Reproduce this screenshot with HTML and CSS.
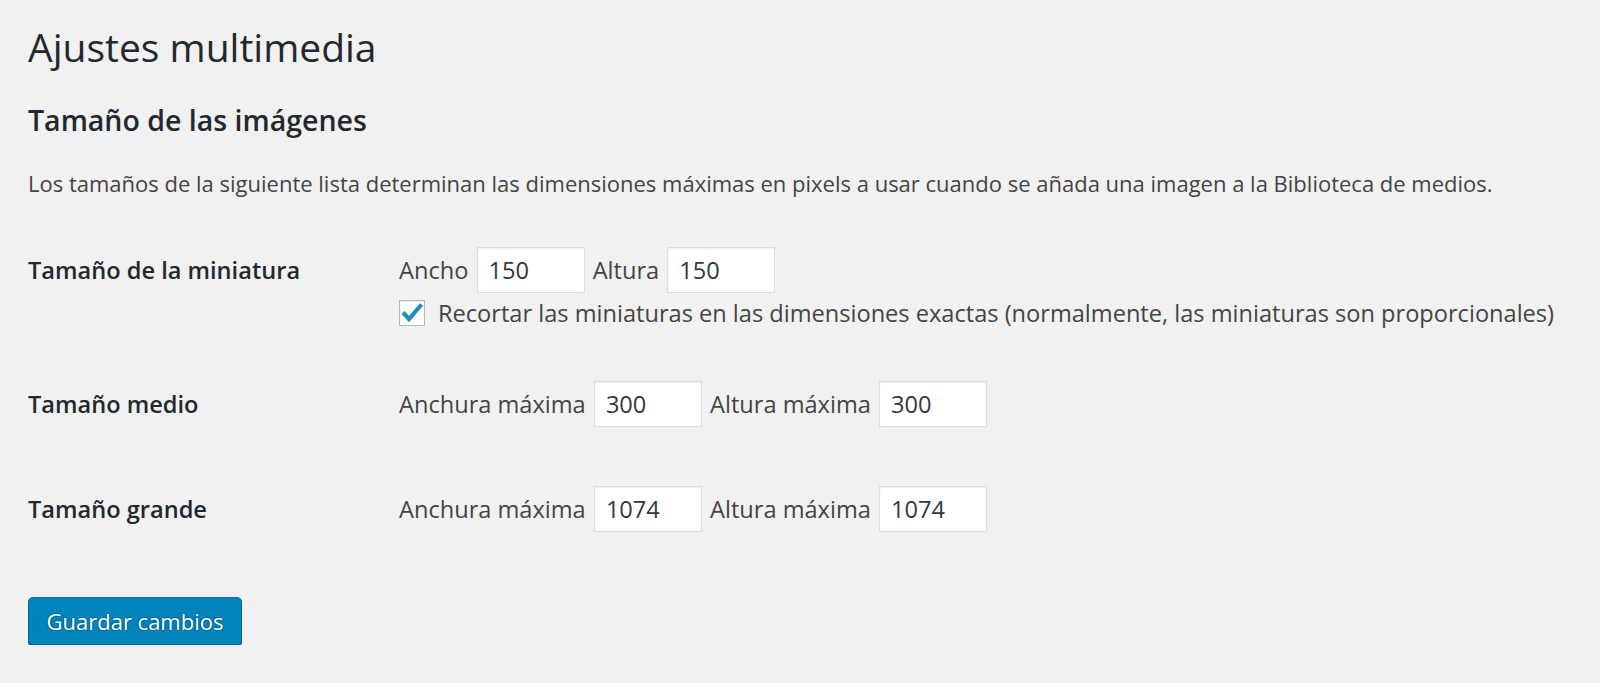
FILE: index.html
```html
<!DOCTYPE html>
<html lang="es">
<head>
<meta charset="utf-8">
<title>Ajustes multimedia</title>
<link rel="stylesheet" href="styles.css">
</head>
<body>
<div class="wrap">
  <h1 class="page-title">Ajustes multimedia</h1>
  <h2 class="section-title">Tamaño de las imágenes</h2>
  <p class="intro">Los tamaños de la siguiente lista determinan las dimensiones máximas en pixels a usar cuando se añada una imagen a la Biblioteca de medios.</p>

  <div class="form-table">
    <div class="row row-thumb">
      <div class="row-label">Tamaño de la miniatura</div>
      <div class="row-field">
        <div class="field-line">
          <label class="field-label" for="tw">Ancho</label> <input class="num" id="tw" type="text" value="150"> <label class="field-label" for="th">Altura</label> <input class="num" id="th" type="text" value="150">
        </div>
        <label class="check-line">
          <span class="checkbox"><svg viewBox="0 0 26 26" width="26" height="26"><path d="M4 12.5 L10 19 L22.5 4.5" fill="none" stroke="#1e8cbe" stroke-width="4.2"/></svg></span>
          <span class="check-text">Recortar las miniaturas en las dimensiones exactas (normalmente, las miniaturas son proporcionales)</span>
        </label>
      </div>
    </div>

    <div class="row row-medium">
      <div class="row-label">Tamaño medio</div>
      <div class="row-field">
        <div class="field-line">
          <label class="field-label" for="mw">Anchura máxima</label> <input class="num" id="mw" type="text" value="300"> <label class="field-label" for="mh">Altura máxima</label> <input class="num" id="mh" type="text" value="300">
        </div>
      </div>
    </div>

    <div class="row">
      <div class="row-label">Tamaño grande</div>
      <div class="row-field">
        <div class="field-line">
          <label class="field-label" for="lw">Anchura máxima</label> <input class="num" id="lw" type="text" value="1074"> <label class="field-label" for="lh">Altura máxima</label> <input class="num" id="lh" type="text" value="1074">
        </div>
      </div>
    </div>
  </div>

  <div class="submit">
    <button class="button-primary" type="button">Guardar cambios</button>
  </div>
</div>
</body>
</html>
```
FILE: styles.css
```css
* { box-sizing: border-box; }

html, body {
  margin: 0;
  padding: 0;
  background: #f1f1f1;
}

body {
  font-family: "Open Sans", "Noto Sans", sans-serif;
  color: #444;
  font-size: 22px;
}

.wrap {
  padding: 22px 0 0 28px;
}

.page-title {
  margin: 0;
  font-size: 39px;
  font-weight: 400;
  line-height: 50px;
  color: #23282d;
}

.section-title {
  margin: 30px 0 0;
  font-size: 28.5px;
  font-weight: 600;
  line-height: 36px;
  color: #23282d;
}

.intro {
  margin: 30px 0 0;
  font-size: 22px;
  line-height: 30px;
  color: #444;
}

.form-table {
  margin-top: 22px;
  font-size: 23.6px;
}

.row {
  display: grid;
  grid-template-columns: 371px 1fr;
  padding: 27px 0 30px;
}

.row-thumb {
  padding-bottom: 28px;
}

.row-medium {
  padding-bottom: 32px;
}

.row-label {
  font-weight: 600;
  color: #23282d;
  line-height: 46px;
}

.field-line {
  line-height: 46px;
  height: 46px;
  white-space: nowrap;
}

.field-label {
  color: #444;
}

.num {
  width: 108px;
  height: 46px;
  margin: 0 2px;
  padding: 0 11px;
  border: 1px solid #ddd;
  box-shadow: inset 0 1px 2px rgba(0,0,0,0.07);
  background: #fff;
  color: #32373c;
  font-family: inherit;
  font-size: 23.6px;
  vertical-align: top;
  outline: none;
}

.check-line {
  display: flex;
  align-items: center;
  gap: 13px;
  margin-top: 7px;
  height: 26px;
  line-height: 26px;
  white-space: nowrap;
}

.checkbox {
  width: 26px;
  height: 26px;
  flex: none;
  border: 1px solid #b4b9be;
  background: #fff;
  box-shadow: inset 0 1px 2px rgba(0,0,0,0.1);
  position: relative;
}

.checkbox svg {
  position: absolute;
  left: -1px;
  top: -1px;
}

.check-text {
  color: #444;
}

.submit {
  padding-top: 35px;
}

.button-primary {
  width: 214px;
  height: 48px;
  padding: 0;
  background: #0085ba;
  border: 1px solid #0073aa;
  border-color: #0073aa #006799 #006799;
  border-radius: 5px;
  box-shadow: 0 2px 0 #006799;
  color: #fff;
  font-family: "Open Sans", "Noto Sans", sans-serif;
  font-size: 22px;
  line-height: 44px;
  white-space: nowrap;
  text-shadow: 0 -1px 1px #006799, 1px 0 1px #006799, 0 1px 1px #006799, -1px 0 1px #006799;
  cursor: pointer;
}
```
